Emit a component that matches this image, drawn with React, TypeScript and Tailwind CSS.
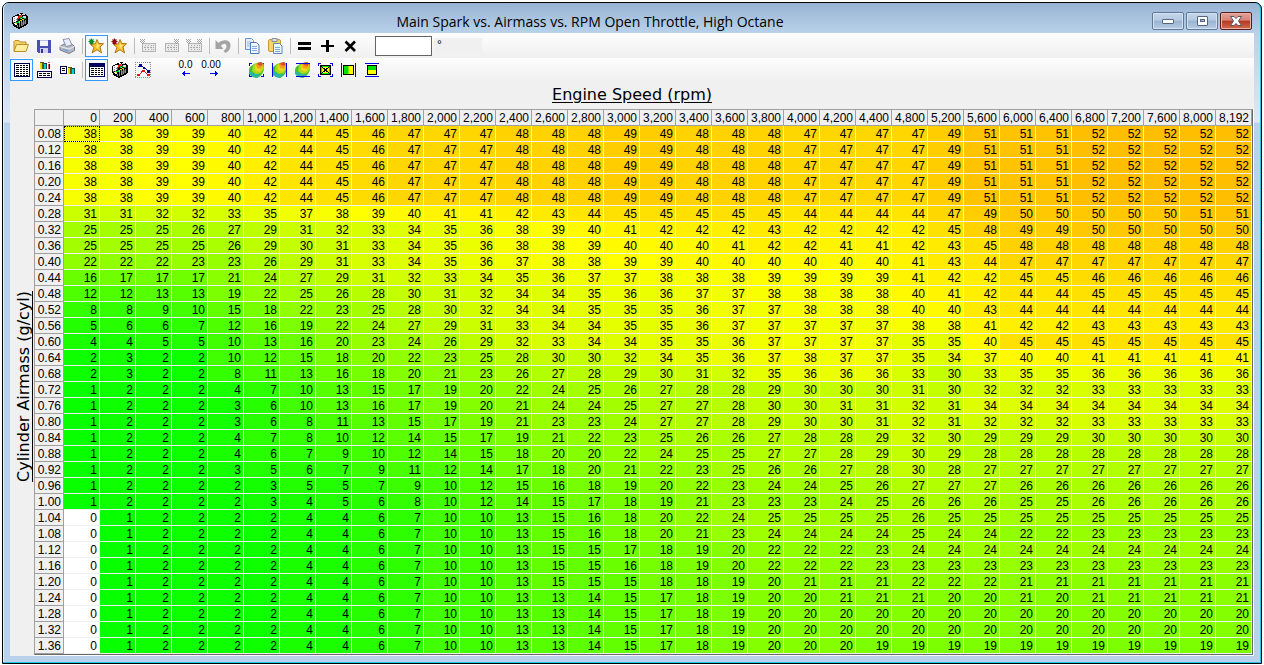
import React from 'react';

const rpm = [
    0, 200, 400, 600, 800, 1000, 1200, 1400, 1600, 1800, 2000, 2200, 2400, 2600, 2800, 3000, 3200,
    3400, 3600, 3800, 4000, 4200, 4400, 4800, 5200, 5600, 6000, 6400, 6800, 7200, 7600, 8000, 8192,
];

const spark = `
38 38 39 39 40 42 44 45 46 47 47 47 48 48 48 49 49 48 48 48 47 47 47 47 49 51 51 51 52 52 52 52 52
38 38 39 39 40 42 44 45 46 47 47 47 48 48 48 49 49 48 48 48 47 47 47 47 49 51 51 51 52 52 52 52 52
38 38 39 39 40 42 44 45 46 47 47 47 48 48 48 49 49 48 48 48 47 47 47 47 49 51 51 51 52 52 52 52 52
38 38 39 39 40 42 44 45 46 47 47 47 48 48 48 49 49 48 48 48 47 47 47 47 49 51 51 51 52 52 52 52 52
38 38 39 39 40 42 44 45 46 47 47 47 48 48 48 49 49 48 48 48 47 47 47 47 49 51 51 51 52 52 52 52 52
31 31 32 32 33 35 37 38 39 40 41 41 42 43 44 45 45 45 45 45 44 44 44 44 47 49 50 50 50 50 50 51 51
25 25 25 26 27 29 31 32 33 34 35 36 38 39 40 41 42 42 42 43 42 42 42 42 45 48 49 49 50 50 50 50 50
25 25 25 25 26 29 30 31 33 34 35 36 38 38 39 40 40 40 41 42 42 41 41 42 43 45 48 48 48 48 48 48 48
22 22 22 23 23 26 29 31 33 34 35 36 37 38 38 39 39 40 40 40 40 40 40 41 43 44 47 47 47 47 47 47 47
16 17 17 17 21 24 27 29 31 32 33 34 35 36 37 37 38 38 38 39 39 39 39 41 42 42 45 45 46 46 46 46 46
12 12 13 13 19 22 25 26 28 30 31 32 34 34 35 36 36 37 37 38 38 38 38 40 41 42 44 44 45 45 45 45 45
8 8 9 10 15 18 22 23 25 28 30 32 34 34 35 35 35 36 37 37 38 38 38 40 40 43 44 44 44 44 44 44 44
5 6 6 7 12 16 19 22 24 27 29 31 33 34 34 35 35 36 37 37 37 37 37 38 38 41 42 42 43 43 43 43 43
4 4 5 5 10 13 16 20 23 24 26 29 32 33 34 34 35 35 36 37 37 37 37 35 35 40 45 45 45 45 45 45 45
2 3 2 2 10 12 15 18 20 22 23 25 28 30 30 32 34 35 36 37 38 37 37 35 34 37 40 40 41 41 41 41 41
2 3 2 2 8 11 13 16 18 20 21 23 26 27 28 29 30 31 32 35 36 36 36 33 30 33 35 35 36 36 36 36 36
1 2 2 2 4 7 10 13 15 17 19 20 22 24 25 26 27 28 28 29 30 30 30 31 30 32 32 32 33 33 33 33 33
1 2 2 2 3 6 10 13 16 17 19 20 21 24 24 25 27 27 28 30 30 31 31 32 31 34 34 34 34 34 34 34 34
1 2 2 2 3 6 8 11 13 15 17 19 21 23 23 24 27 27 28 29 30 30 31 32 31 32 32 32 33 33 33 33 33
1 2 2 2 4 7 8 10 12 14 15 17 19 21 22 23 25 26 26 27 28 28 29 32 30 29 29 29 30 30 30 30 30
1 2 2 2 4 6 7 9 10 12 14 15 18 20 20 22 24 25 25 27 27 28 29 30 29 28 28 28 28 28 28 28 28
1 2 2 2 3 5 6 7 9 11 12 14 17 18 20 21 22 23 25 26 26 27 28 30 28 27 27 27 27 27 27 27 27
1 2 2 2 2 3 5 5 7 9 10 12 15 16 18 19 20 22 23 24 24 25 26 27 27 27 26 26 26 26 26 26 26
1 2 2 2 2 3 4 5 6 8 10 12 14 15 17 18 19 21 23 23 23 24 25 26 26 26 25 25 26 26 26 26 26
0 1 2 2 2 2 4 4 6 7 10 10 13 15 16 18 20 22 24 25 25 25 25 26 25 25 25 25 25 25 25 25 25
0 1 2 2 2 2 4 4 6 7 10 10 13 15 16 18 20 21 23 24 24 24 24 25 24 24 22 22 23 23 23 23 23
0 1 2 2 2 2 4 4 6 7 10 10 13 15 15 17 18 19 20 22 22 22 23 24 24 24 24 24 24 24 24 24 24
0 1 2 2 2 2 4 4 6 7 10 10 13 15 15 16 18 19 20 22 22 22 23 23 23 23 23 23 23 23 23 23 23
0 1 2 2 2 2 4 4 6 7 10 10 13 15 15 15 18 18 19 20 21 21 21 22 22 22 21 21 21 21 21 21 21
0 1 2 2 2 2 4 4 6 7 10 10 13 13 14 15 17 18 19 20 20 21 21 21 20 20 21 20 21 21 21 21 21
0 1 2 2 2 2 4 4 6 7 10 10 13 13 14 15 17 18 19 20 20 20 20 20 20 20 20 20 20 20 20 20 20
0 1 2 2 2 2 4 4 6 7 10 10 13 13 14 15 17 18 19 20 20 20 20 20 20 20 20 20 20 20 20 20 20
0 1 2 2 2 2 4 4 6 7 10 10 13 13 14 15 17 18 19 20 20 20 19 19 19 19 19 19 19 19 19 19 19
`
    .trim()
    .split('\n')
    .map((line) => line.split(' ').map(Number));

// green -> yellow up to 39 degrees, then towards orange
const heat = (v: number) => {
    if (v === 0) return '#ffffff';
    if (v <= 39) return `rgb(${Math.round((v / 39) * 255)},255,0)`;
    return `rgb(255,${255 - (v - 39) * 5},0)`;
};

const Icon = ({ children, crisp = true }: { children: React.ReactNode; crisp?: boolean }) => (
    <svg width="16" height="16" viewBox="0 0 16 16" fill="none" shapeRendering={crisp ? 'crispEdges' : 'auto'} aria-hidden="true">
        {children}
    </svg>
);

const ToolButton = ({ label, active = false, disabled = false, children }: {
    label: string;
    active?: boolean;
    disabled?: boolean;
    children: React.ReactNode;
}) => (
    <button
        type="button"
        aria-label={label}
        disabled={disabled}
        className={`flex h-[22px] w-[23px] shrink-0 items-center justify-center border ${active ? 'border-[#3399ff] bg-[#f5f9fe]' : 'border-transparent'}`}
    >
        {children}
    </button>
);

const Separator = () => (
    <div className="flex w-1.5 shrink-0 justify-center">
        <div className="h-4 w-px bg-[#bdbdbd]" />
    </div>
);

const CubeIcon = () => (
    <Icon>
        <path d="M3 2h2V1h3V0h3v1h3v1h1v1h1v8h-1v1h-1v1h-2v1h-2v1H8v1H6v-1H4v-1H2v-1H1v-2H0V4h1V3h2z" fill="#000" />
        <path d="M1 4h2V3h3v2H5v3H4v1H1zM2 10h3v2H3v-1H2zM7 1h2v1H7z" fill="#fff" />
        <path d="M10 1h3v1h-3zM11 3h3v2h-3zM9 5h1v1H9z" fill="#d8d8d8" />
        <path d="M2 5h1v1H2zM4 6h1v1H4zM2 7h1v1H2z" fill="#8a8a8a" />
        <path d="M7 2h2v2H8v1H7v1H6v2H5V5h1V3h1z" fill="#e81818" />
        <path d="M9 2h1v2H9zM8 4h1v2H8zM6 8h1v2H6zM3 9h3v1H3zM1 9h1v1H1zM10 4h1v1h-1zM12 5h2v1h-2z" fill="#00c832" />
        <path d="M7 10h1v4H7zM9 8h1v5H9zM11 7h1v5h-1zM13 7h1v4h-1zM5 12h1v2H5z" fill="#8c8c8c" />
        <path d="M8 7h2v1H8zM7 8h1v2H7zM10 6h2v1h-2zM4 10h1v1H4z" fill="#e6dc00" />
        <path d="M10 9h1v4h-1zM12 8h1v3h-1z" fill="#555" />
    </Icon>
);

const StarIcon = ({ burst }: { burst: string }) => (
    <Icon crisp={false}>
        <path d="M9 1.500l1.700 4 4.800.2-3.500 3.200 1.500 6-4.500-3.200-5 3.200 2-5.500L2.500 6.500l4.900-.7z" fill="#fbc02a" stroke="#b07410" strokeWidth="1" />
        <path d="M9 4l1 3 2.500.2-2.200 1.700.6 2.300-2.500-1.500z" fill="#ffe680" />
        <path d="M3.500.5v6M.5 3.500h6M1.500 1.500l4 4M5.500 1.500l-4 4" stroke={burst} strokeWidth="1.200" />
    </Icon>
);

const GridDots = ({ children }: { children: React.ReactNode }) => (
    <Icon>
        <path d="M2.500 5.500h13v8h-13z" stroke="#b4b4b4" />
        <path d="M3 6h12v7H3z" fill="#e9e9e9" />
        <path d="M5 7h1v1H5zM8 7h1v1H8zM11 7h1v1h-1zM13 7h1v1h-1zM4 9h2v1H4zM7 9h2v1H7zM10 9h2v1h-2zM13 9h1v1h-1zM5 11h1v1H5zM8 11h1v1H8zM11 11h1v1h-1zM13 11h1v1h-1z" fill="#a8a8a8" />
        {children}
    </Icon>
);

const Burst = ({ x }: { x: number }) => (
    <path transform={`translate(${x} 0)`} d="M2 1h1v1H2zM0 3h1v1H0zM4 3h1v1H4zM2 5h1v1H2zM0 1h1v1H0zM4 1h1v1H4zM1 2h1v1H1zM3 2h1v1H3zM2 3h1v1H2zM1 4h1v1H1zM3 4h1v1H3z" fill="#a4a4a4" />
);

const SheetLines = ({ top, count }: { top: number; count: number }) => (
    <>
        {Array.from({ length: count }, (_, i) => top + i * 2).map((y) => (
            <path key={y} d={`M2 ${y}h3v1H2zM6 ${y}h2v1H6zM9 ${y}h2v1H9zM12 ${y}h2v1h-2z`} fill="#000" />
        ))}
    </>
);

const Bars = ({ x, y }: { x: number; y: number }) => (
    <g transform={`translate(${x} ${y})`}>
        <path d="M0 0h4v1H0zM2 1h2v6H2z" fill="#5a5600" />
        <path d="M0 1h2v6H0z" fill="#e8de00" />
        <path d="M4 1h3v1H4zM6 2h1v5H6z" fill="#004a4c" />
        <path d="M4 2h2v5H4z" fill="#00d0d0" />
        <path d="M8 0h2v1H8zM8 2h1v5H8z" fill="#d06060" />
        <path d="M9 2h1v5H9z" fill="#5c0808" />
    </g>
);

const BlobShape = () => (
    <g shapeRendering="auto">
        <path d="M5 2l3-1 4-1 3 2v6l-2 4-3 3-2 1-4-1-3-2-2-3 2-5z" fill="#44c22c" />
        <path d="M0 10l3 0 4 2 5 1-4 3-4-1-3-2z" fill="#2cb8a0" />
        <path d="M4 3l5-2 5 1 1 5-3 4-5 1-4-3z" fill="#a8da20" />
        <path d="M6 3l4-2 4 1-1 5-3 3-4-2z" fill="#ecd81c" />
        <path d="M7 2l4-1 3 2-2 4-4-1z" fill="#f2a01c" />
        <path d="M8 1l4-1 2 2-2 2-3-1z" fill="#d8502c" />
    </g>
);

const corners = 'M0 1h3v1H1v2H0zM12 1h3v3h-1V2h-2zM0 12h1v2h2v1H0zM14 12h1v3h-3v-1h2z';
const sides = 'M0 1h1v14H0zM14 1h1v14h-1z';
const caps = 'M1 1h14v1H1zM1 14h14v1H1z';

const Toolbar = () => (
    <div role="toolbar" aria-label="Edit" className="flex h-[25px] items-center bg-linear-to-b from-[#fdfdfd] to-[#f0f0f0] [&>button]:pr-px">
        <ToolButton label="Open">
            <Icon crisp={false}>
                <path d="M1 13V3.500l1-1h4l1 1.500h6v2" fill="#f3d36c" stroke="#bd8e22" />
                <path d="M1 13.500L3.500 6.500h12l-2.500 7z" fill="#ffeda0" stroke="#bd8e22" />
            </Icon>
        </ToolButton>
        <ToolButton label="Save">
            <Icon>
                <path d="M1 2h14v13H2l-1-1z" fill="#4b4fb4" />
                <path d="M4 2h8v6H4z" fill="#f4f5fc" />
                <path d="M4 2h8v1H4z" fill="#b9bce8" />
                <path d="M4 10h8v5H4z" fill="#cfd1ee" />
                <path d="M5 11h2v4H5z" fill="#33368c" />
            </Icon>
        </ToolButton>
        <ToolButton label="Print">
            <Icon crisp={false}>
                <path d="M1 8.500l4-2.500 8.500.5 2 2v4l-5.500 3-9-3.500z" fill="#b7bac2" stroke="#777b85" />
                <path d="M4 1.500l6-1 3 6.500-6 1.500z" fill="#e6f0fc" stroke="#8a93a5" />
                <path d="M1 8.500l9 2.500 5.500-2.500" stroke="#eceef2" />
                <path d="M3 11.500l6 2 1.500-1-6-1.800z" fill="#6fa0dc" />
            </Icon>
        </ToolButton>
        <Separator />
        <ToolButton label="Set Base Tune" active><StarIcon burst="#0b8a22" /></ToolButton>
        <ToolButton label="Compare"><StarIcon burst="#8e0a0a" /></ToolButton>
        <Separator />
        <ToolButton label="Insert left" disabled><GridDots><Burst x={0} /></GridDots></ToolButton>
        <ToolButton label="Insert right" disabled><GridDots><Burst x={11} /></GridDots></ToolButton>
        <ToolButton label="Insert both" disabled><GridDots><Burst x={0} /><Burst x={11} /></GridDots></ToolButton>
        <Separator />
        <ToolButton label="Undo" disabled>
            <Icon crisp={false}>
                <path d="M.5 2v9h8L6 8c2-3 5.500-3 5.500.5 0 2-1.500 3-3 4.500l2 2c3-1.500 5-4 5-7.500C15.500 1.500 8 .5 3.500 5z" fill="#a4a4a4" />
            </Icon>
        </ToolButton>
        <Separator />
        <ToolButton label="Copy">
            <Icon crisp={false}>
                <path d="M1.500.500h6l2 2v9h-8z" fill="#e2edfc" stroke="#6a94cf" />
                <path d="M3 4h4M3 6h4M3 8h4" stroke="#9dbde8" />
                <path d="M6.500 4.500h6l2.500 2.500v8.500h-8.500z" fill="#eef5ff" stroke="#4a78b8" />
                <path d="M8 8.500h5M8 10.500h5M8 12.500h5" stroke="#86aadd" />
            </Icon>
        </ToolButton>
        <ToolButton label="Paste">
            <Icon crisp={false}>
                <rect x="1.500" y="1.500" width="12" height="12" rx="1.500" fill="#f5d469" stroke="#c29a2f" />
                <path d="M5 .5h5v3H5z" fill="#d9dde6" stroke="#8b8f99" />
                <path d="M6.500 5.500h6l2.500 2.500v7.500h-8.500z" fill="#eef5ff" stroke="#5f87c0" />
                <path d="M8 9.500h5M8 11.500h5M8 13.500h5" stroke="#86aadd" />
            </Icon>
        </ToolButton>
        <Separator />
        <ToolButton label="Set equal">
            <Icon><path d="M2 4h13v3H2zM2 9h13v3H2z" fill="#000" /></Icon>
        </ToolButton>
        <ToolButton label="Add">
            <Icon><path d="M7 2h3v5h5v2h-5v5H7V9H2V7h5z" fill="#000" /></Icon>
        </ToolButton>
        <ToolButton label="Multiply">
            <Icon crisp={false}><path d="M3.500 3.500l9.500 9.500M13 3.500L3.500 13" stroke="#000" strokeWidth="2.600" /></Icon>
        </ToolButton>
        <input
            aria-label="Value"
            type="text"
            className="ml-[13px] h-5 w-[57px] border border-[#646464] bg-white px-1 text-[12px] outline-none"
        />
        <span className="ml-0.5 h-4 w-12 bg-[#f0f0f0] pl-[3px] text-[12px] leading-[14px]">°</span>
    </div>
);

const ViewBar = () => (
    <div role="toolbar" aria-label="View" className="flex h-[23px] items-center bg-linear-to-b from-[#fdfdfd] to-[#f0f0f0]">
        <ToolButton label="Table view" active>
            <Icon>
                <path d="M0 1h16v14H0z" fill="#000050" />
                <path d="M1 2h14v12H1z" fill="#fff" />
                <SheetLines top={3} count={6} />
            </Icon>
        </ToolButton>
        <ToolButton label="Graph over table">
            <Icon>
                <Bars x={3} y={0} />
                <path d="M0 9h15v7H0z" fill="#000050" />
                <path d="M1 10h13v5H1z" fill="#fff" />
                <path d="M2 11h3v1H2zM6 11h3v1H6zM10 11h3v1h-3zM2 13h3v1H2zM6 13h3v1H6zM10 13h3v1h-3z" fill="#000" />
            </Icon>
        </ToolButton>
        <ToolButton label="Table beside graph">
            <Icon>
                <path d="M0 4h7v8H0z" fill="#000050" />
                <path d="M1 5h5v6H1z" fill="#fff" />
                <path d="M2 6h3v1H2zM2 8h3v1H2z" fill="#000" />
                <Bars x={8} y={5} />
            </Icon>
        </ToolButton>
        <Separator />
        <ToolButton label="Table" active>
            <Icon>
                <path d="M0 1h16v14H0z" fill="#000060" />
                <path d="M1 5h14v9H1z" fill="#fff" />
                <SheetLines top={6} count={4} />
            </Icon>
        </ToolButton>
        <ToolButton label="3D surface"><CubeIcon /></ToolButton>
        <ToolButton label="2D chart">
            <Icon>
                <path d="M0 0h16v16H0z" fill="#fafafa" />
                <path d="M.500 0v16M0 15.500h16M15.500 0v16M0 .500h16" stroke="#8a8a8a" strokeDasharray="1 1" />
                <path d="M3 4h1v1H3zM4 2h3v3H4zM7 4h1v1H7zM8 5h2v2H8zM10 6h1v1h-1zM11 7h1v1h-1zM12 8h3v3h-3z" fill="#00008c" />
                <path d="M2 12h3v2H2zM5 11h1v1H5zM6 9h1v2H6zM7 8h3v2H7zM10 10h1v1h-1zM11 11h1v1h-1zM12 12h3v2h-3z" fill="#e81414" />
            </Icon>
        </ToolButton>
        <button type="button" className="ml-5 flex h-[22px] w-[23px] shrink-0 flex-col items-center text-[10px] leading-3">
            0.0
            <svg width="8" height="5" viewBox="0 0 8 5" shapeRendering="crispEdges" aria-hidden="true">
                <path d="M0 2h8v1H0zM1 1h2v1H1zM1 3h2v1H1zM2 0h1v5H2z" fill="#0000ff" />
            </svg>
        </button>
        <button type="button" className="flex h-[22px] w-7 shrink-0 flex-col items-center text-[10px] leading-3">
            0.00
            <svg width="8" height="5" viewBox="0 0 8 5" className="ml-1.5" shapeRendering="crispEdges" aria-hidden="true">
                <path d="M0 2h8v1H0zM5 1h2v1H5zM5 3h2v1H5zM5 0h1v5H5z" fill="#0000ff" />
            </svg>
        </button>
        <div className="ml-5 flex">
            <ToolButton label="Smooth all">
                <Icon><path d={corners} fill="#0000e6" /><BlobShape /></Icon>
            </ToolButton>
            <ToolButton label="Smooth columns">
                <Icon><BlobShape /><path d={sides} fill="#0000e6" /></Icon>
            </ToolButton>
            <ToolButton label="Smooth rows">
                <Icon><BlobShape /><path d={caps} fill="#0000e6" /></Icon>
            </ToolButton>
            <ToolButton label="Interpolate all">
                <Icon>
                    <path d={corners} fill="#0000e6" />
                    <path d="M2 3h11v10H2z" fill="#000" />
                    <path d="M3 4h9v8H3z" fill="#00e000" />
                    <path d="M4 6h7v4H4zM5 5h5v6H5z" fill="#ffff00" />
                    <path d="M3 4l9 8M12 4l-9 8" stroke="#000" />
                </Icon>
            </ToolButton>
            <ToolButton label="Interpolate columns">
                <Icon>
                    <path d={sides} fill="#0000e6" />
                    <path d="M2 3h11v10H2z" fill="#000" />
                    <path d="M3 4h5v8H3z" fill="#00e000" />
                    <path d="M8 4h4v8H8z" fill="#ffff00" />
                    <path d="M7 4h1v8H7z" fill="#7cf000" />
                </Icon>
            </ToolButton>
            <ToolButton label="Interpolate rows">
                <Icon>
                    <path d={caps} fill="#0000e6" />
                    <path d="M3 3h10v10H3z" fill="#000" />
                    <path d="M4 4h8v4H4z" fill="#00e000" />
                    <path d="M4 8h8v4H4z" fill="#ffff00" />
                </Icon>
            </ToolButton>
        </div>
    </div>
);

const captionButton = 'flex h-[18px] w-8 items-center justify-center rounded-xs border';
const captionBlue = 'border-[#5f7896] bg-[linear-gradient(#c5d6ea_0,#b4c9e1_45%,#9ab3d0_50%,#b4cce6_100%)] shadow-[inset_0_0_0_1px_#d4e2f1]';

export default function App() {
    return (
        <div className="min-h-screen bg-white pt-[2px] pr-[2px] pb-px pl-[2px] font-['Liberation_Sans',sans-serif] text-black">
            <div className="rounded-t-[7px] border border-black bg-[#27c4e8]">
                <main className="mr-px mb-px rounded-t-md border-l border-[#e6f1fb] bg-[linear-gradient(#98b4d4_0,#b9d1ea_30px,#dde8f5_119px,#b9d1ea_120px)] px-1.5 pb-1.5">
                    <header className="flex h-[30px] items-center">
                        <div className="pt-[5px] pl-0.5"><CubeIcon /></div>
                        <h1 className="flex-1 pt-2 text-center font-['Open_Sans','Noto_Sans',sans-serif] text-[14px] leading-5">
                            Main Spark vs. Airmass vs. RPM Open Throttle, High Octane
                        </h1>
                        <div className="flex gap-[2px] pt-1.5 pr-0.5">
                            <button type="button" aria-label="Minimize" className={`${captionButton} ${captionBlue}`}>
                                <svg width="12" height="6" viewBox="0 0 12 6" aria-hidden="true">
                                    <rect x=".5" y="1.500" width="11" height="4" rx=".5" fill="#fff" stroke="#54657c" />
                                </svg>
                            </button>
                            <button type="button" aria-label="Maximize" className={`${captionButton} ${captionBlue}`}>
                                <svg width="11" height="10" viewBox="0 0 11 10" aria-hidden="true">
                                    <rect x=".5" y=".5" width="10" height="9" rx=".5" fill="#fff" stroke="#54657c" />
                                    <rect x="3.500" y="3.500" width="4" height="2" fill="#9fb8d6" stroke="#54657c" />
                                </svg>
                            </button>
                            <button
                                type="button"
                                aria-label="Close"
                                className={`${captionButton} border-[#5a1a1c] bg-[linear-gradient(#e2a39a_0,#d6857a_45%,#b83a22_50%,#cf6a4e_100%)] shadow-[inset_0_0_0_1px_#e8b4a8]`}
                            >
                                <svg width="12" height="10" viewBox="0 0 12 10" aria-hidden="true">
                                    <path d="M.5.500h3.500l2 2 2-2h3.500l-3 4.500 3 4.500H8l-2-2-2 2H.500l3-4.500z" fill="#fff" stroke="#5b5560" />
                                </svg>
                            </button>
                        </div>
                    </header>

                    <div className="bg-[#f0f0f0]">
                        <Toolbar />
                        <ViewBar />

                        <h2 className="h-7 text-center font-['DejaVu_Sans',sans-serif] text-[16px] leading-7 underline underline-offset-2">
                            Engine Speed (rpm)
                        </h2>

                        <div className="flex">
                            <div className="flex w-6 shrink-0 items-center justify-end pt-2">
                                <h2 className="rotate-180 whitespace-nowrap font-['DejaVu_Sans',sans-serif] text-[16px] leading-5 underline [writing-mode:vertical-rl]">
                                    Cylinder Airmass (g/cyl)
                                </h2>
                            </div>

                            <div className="flex-1 border-r border-b border-white">
                                <table className="w-full table-fixed border-separate border-spacing-0 border border-t-[#a0a0a0] border-r-[#696969] border-b-[#696969] border-l-[#a0a0a0] text-right text-[12px] leading-[14px]">
                                    <thead>
                                        <tr>
                                            <td className="h-4 w-[29px] border-r border-b border-[#a0a0a0] p-0" />
                                            {rpm.map((r) => (
                                                <th key={r} scope="col" className="h-4 border-r border-b border-[#a0a0a0] p-0 pt-px pr-[2px] font-normal">
                                                    {r.toLocaleString('en-US')}
                                                </th>
                                            ))}
                                        </tr>
                                    </thead>
                                    <tbody>
                                        {spark.map((row, i) => (
                                            <tr key={i}>
                                                <th scope="row" className="h-4 border-r border-b border-[#a0a0a0] p-0 pt-px pr-[2px] font-normal">
                                                    {(0.08 + i * 0.04).toFixed(2)}
                                                </th>
                                                {row.map((v, j) => (
                                                    <td
                                                        key={j}
                                                        className={`h-4 border-r border-b border-[#f0f0f0] bg-clip-padding p-0 pt-px pr-[2px] ${i + j === 0 ? 'outline-1 -outline-offset-1 outline-dotted outline-black' : ''}`}
                                                        style={{ backgroundColor: heat(v) }}
                                                    >
                                                        {v}
                                                    </td>
                                                ))}
                                            </tr>
                                        ))}
                                    </tbody>
                                </table>
                            </div>
                        </div>
                    </div>
                </main>
            </div>
        </div>
    );
}
